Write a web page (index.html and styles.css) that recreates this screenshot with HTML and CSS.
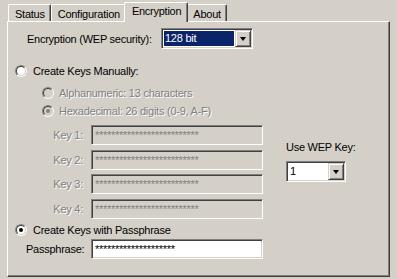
FILE: index.html
```html
<!DOCTYPE html>
<html>
<head>
<meta charset="utf-8">
<link rel="stylesheet" href="styles.css">
</head>
<body>
<div class="window">
  <div class="tabs">
    <div class="tab">Status</div>
    <div class="tab">Configuration</div>
    <div class="tab active">Encryption</div>
    <div class="tab">About</div>
  </div>
  <div class="panel">
    <div class="enc-row">
      <span class="enc-label">Encryption (WEP security):</span>
      <div class="combo combo-enc">
        <span class="combo-val selected">128 bit</span>
        <span class="combo-btn"><span class="arrow"></span></span>
      </div>
    </div>

    <div class="radio-row r-manual">
      <span class="radio"><span class="radio-in"></span></span>
      <span class="rtext">Create Keys Manually:</span>
    </div>
    <div class="radio-row sub r-alpha disabled">
      <span class="radio"><span class="radio-in"></span></span>
      <span class="rtext">Alphanumeric: 13 characters</span>
    </div>
    <div class="radio-row sub r-hex disabled">
      <span class="radio checked"><span class="radio-in"></span></span>
      <span class="rtext">Hexadecimal: 26 digits (0-9, A-F)</span>
    </div>

    <div class="keys">
      <div class="key-grid">
        <span class="key-label disabled">Key 1:</span>
        <div class="field dis"><span class="pw">**************************</span></div>
        <span class="key-label disabled">Key 2:</span>
        <div class="field dis"><span class="pw">**************************</span></div>
        <span class="key-label disabled">Key 3:</span>
        <div class="field dis"><span class="pw">**************************</span></div>
        <span class="key-label disabled">Key 4:</span>
        <div class="field dis"><span class="pw">**************************</span></div>
      </div>
      <div class="wep">
        <span class="wep-label">Use WEP Key:</span>
        <div class="combo combo-wep">
          <span class="combo-val">1</span>
          <span class="combo-btn"><span class="arrow"></span></span>
        </div>
      </div>
    </div>

    <div class="radio-row r-pass">
      <span class="radio checked"><span class="radio-in"></span></span>
      <span class="rtext">Create Keys with Passphrase</span>
    </div>
    <div class="pass-row">
      <span class="pass-label">Passphrase:</span>
      <div class="field"><span class="pw">********************</span></div>
    </div>
  </div>
</div>
</body>
</html>
```

FILE: styles.css
```css
html, body {
  margin: 0;
  padding: 0;
  background: #d4d0c8;
}
body {
  font-family: "Liberation Sans", Arial, sans-serif;
  font-size: 11px;
  letter-spacing: -0.25px;
  color: #000;
  width: 397px;
  height: 279px;
  overflow: hidden;
}
.window {
  padding-top: 2px;
}
.tabs {
  display: flex;
  align-items: flex-end;
  height: 19px;
  padding-left: 8px;
}
.tab {
  position: relative;
  box-sizing: border-box;
  height: 17px;
  padding: 3px 5px 0 6px;
  border-left: 1px solid #fff;
  border-top: 1px solid #fff;
  border-right: 1px solid #404040;
  border-radius: 2px 2px 0 0;
  box-shadow: inset -1px 0 0 #808080;
  line-height: 12px;
  white-space: nowrap;
}
.tab.active {
  z-index: 1;
  height: 20px;
  margin: 0 -2px -1px -2px;
  padding: 2px 6px 0 7px;
  background: #d4d0c8;
}
.panel {
  box-sizing: border-box;
  margin-left: 7px;
  width: 383px;
  height: 256px;
  border-left: 1px solid #fff;
  border-top: 1px solid #fff;
  border-right: 1px solid #404040;
  border-bottom: 1px solid #404040;
  box-shadow: inset -1px -1px 0 #808080;
}
.disabled, .disabled .rtext {
  color: #808080;
  text-shadow: 1px 1px 0 #fff;
}
.enc-row {
  display: flex;
  align-items: center;
  margin-top: 6px;
  padding-left: 19px;
  height: 21px;
}
.enc-label {
  width: 134px;
}
.combo {
  box-sizing: border-box;
  display: flex;
  height: 21px;
  padding: 2px;
  border: 1px solid;
  border-color: #808080 #fff #fff #808080;
  box-shadow: inset 1px 1px 0 #404040, inset -1px -1px 0 #d4d0c8;
  background: #fff;
}
.combo-enc {
  width: 92px;
}
.combo-wep {
  width: 60px;
}
.combo-val {
  flex: 1;
  line-height: 15px;
  padding-left: 1px;
}
.combo-val.selected {
  background: #0a246a;
  color: #fff;
  margin-right: 1px;
}
.combo-btn {
  box-sizing: border-box;
  width: 16px;
  height: 17px;
  margin: -1px -1px -1px 0;
  border: 1px solid;
  border-color: #d4d0c8 #404040 #404040 #d4d0c8;
  box-shadow: inset 1px 1px 0 #fff, inset -1px -1px 0 #808080;
  background: #d4d0c8;
  display: flex;
  align-items: center;
  justify-content: center;
}
.arrow {
  width: 0;
  height: 0;
  border-left: 3.5px solid transparent;
  border-right: 3.5px solid transparent;
  border-top: 4px solid #000;
  margin-top: 1px;
}
.radio-row {
  display: flex;
  align-items: center;
  height: 12px;
  padding-left: 7px;
}
.r-manual { margin-top: 16px; }
.r-alpha { margin-top: 10px; }
.r-hex { margin-top: 6px; }
.radio-row.sub { padding-left: 34px; }
.radio {
  box-sizing: border-box;
  width: 12px;
  height: 12px;
  border-radius: 50%;
  border: 1px solid;
  border-color: #808080 #fff #fff #808080;
  flex: none;
}
.radio-in {
  box-sizing: border-box;
  display: flex;
  align-items: center;
  justify-content: center;
  width: 10px;
  height: 10px;
  border-radius: 50%;
  border: 1px solid;
  border-color: #404040 #d4d0c8 #d4d0c8 #404040;
  background: #fff;
}
.disabled .radio-in {
  background: #d4d0c8;
}
.radio.checked .radio-in::after {
  content: "";
  width: 4px;
  height: 4px;
  border-radius: 50%;
  background: #000;
}
.disabled .radio.checked .radio-in::after {
  background: #808080;
}
.rtext {
  margin-left: 6px;
  line-height: 12px;
}
.sub .rtext { margin-left: 5px; }
.keys {
  display: flex;
  margin-top: 8px;
}
.key-grid {
  display: grid;
  grid-template-columns: 75px 172px;
  grid-auto-rows: 20px;
  column-gap: 8px;
  row-gap: 4.67px;
  align-items: center;
}
.key-label {
  text-align: right;
}
.field {
  box-sizing: border-box;
  height: 20px;
  border: 1px solid;
  border-color: #808080 #fff #fff #808080;
  box-shadow: inset 1px 1px 0 #404040, inset -1px -1px 0 #d4d0c8;
  background: #fff;
  padding: 2px 0 0 3px;
  display: flex;
}
.field.dis {
  background: #d4d0c8;
  color: #808080;
}
.pw {
  letter-spacing: -0.3px;
  line-height: 14px;
}
.wep {
  display: flex;
  flex-direction: column;
  margin-left: 23px;
  padding-top: 16px;
}
.wep-label {
  line-height: 12px;
  margin-bottom: 8px;
}
.r-pass { margin-top: 5px; }
.pass-row {
  display: flex;
  align-items: center;
  margin-top: 3px;
  padding-left: 18px;
}
.pass-label {
  width: 65px;
}
.pass-row .field {
  width: 172px;
  height: 20px;
}
```
